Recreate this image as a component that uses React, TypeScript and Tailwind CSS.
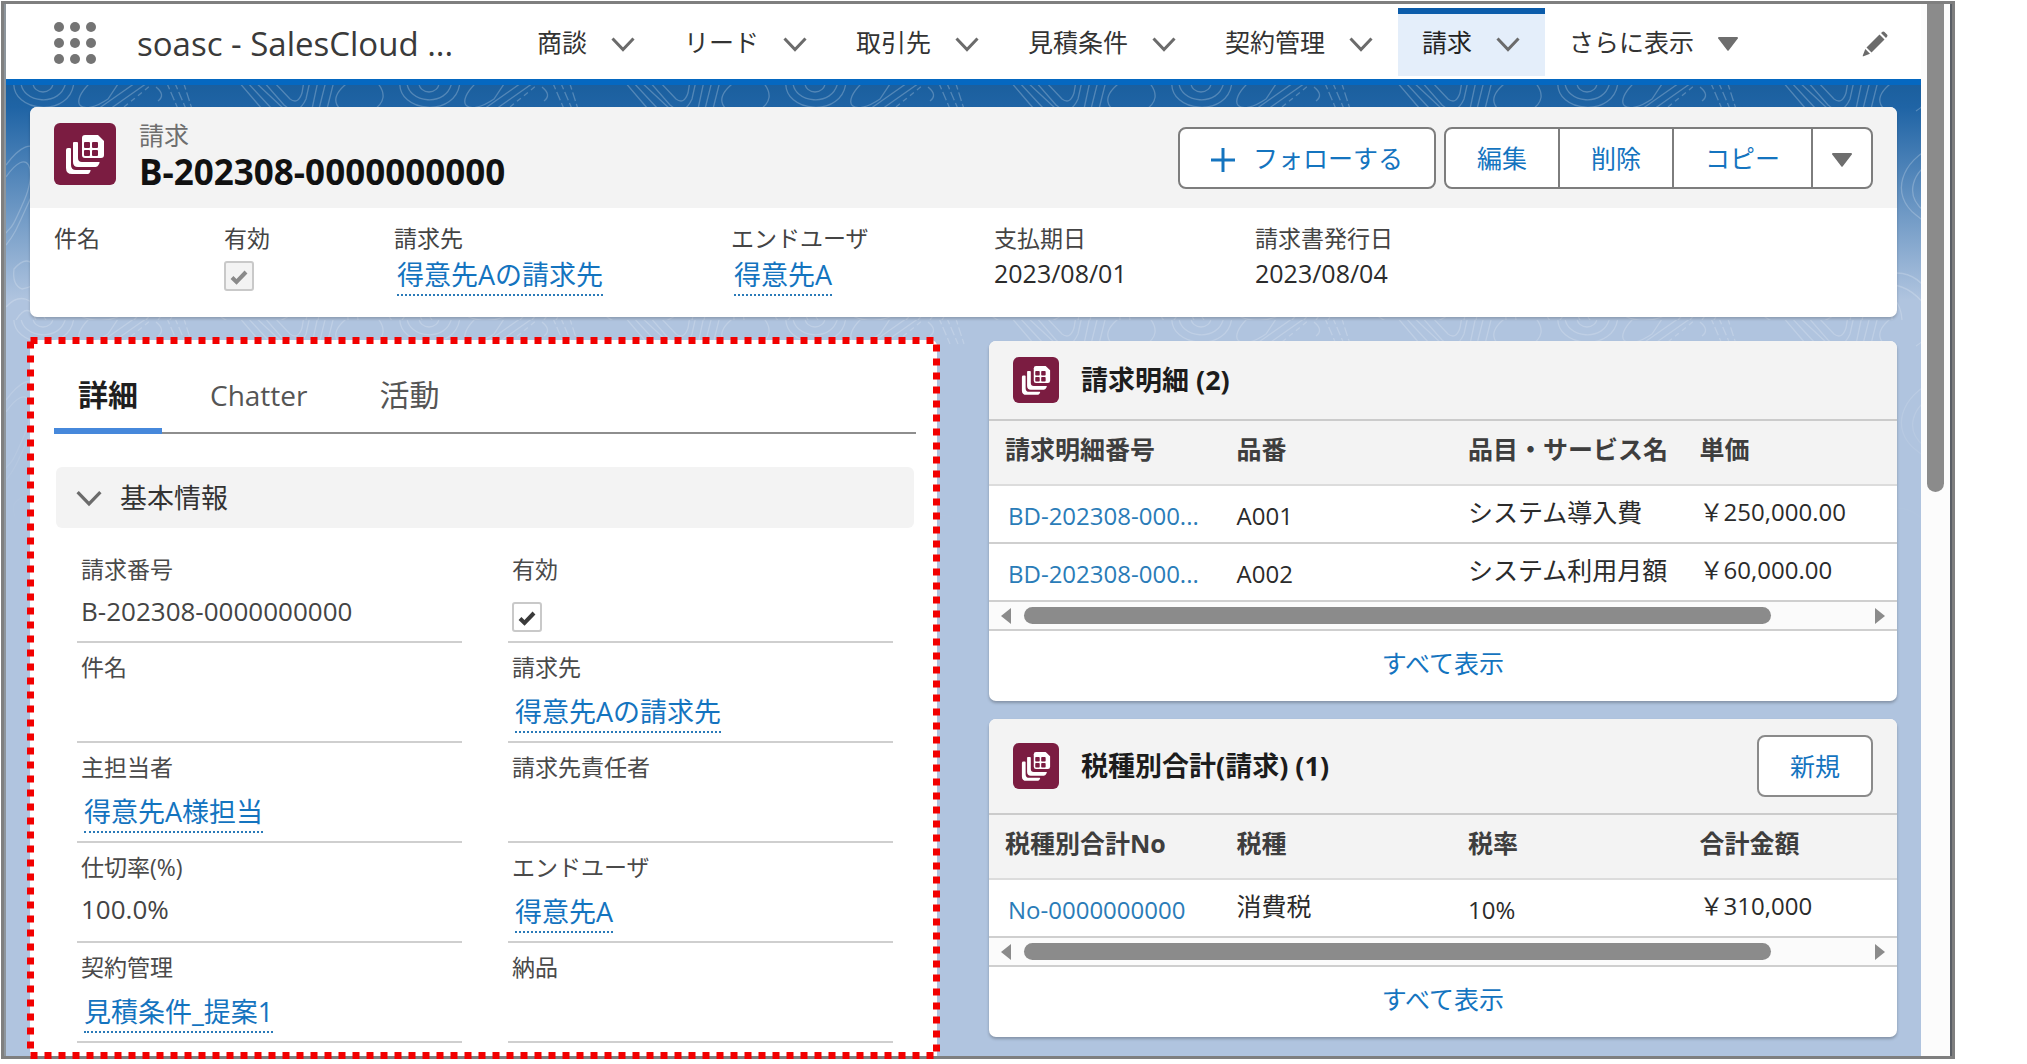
import type { ReactNode } from "react";

const navItems = [
  { label: "商談" },
  { label: "リード" },
  { label: "取引先" },
  { label: "見積条件" },
  { label: "契約管理" },
  { label: "請求", active: true },
];

function Chevron({ className = "" }: { className?: string }) {
  return (
    <svg viewBox="0 0 24 24" className={className} fill="none" stroke="#6b6b6b" strokeWidth="3" aria-hidden="true">
      <path d="M1.5 6.5 L12 17.5 L22.5 6.5" />
    </svg>
  );
}

function Triangle({ className = "" }: { className?: string }) {
  return (
    <svg viewBox="0 0 20 14" className={className} fill="#6e6e6e" aria-hidden="true">
      <path d="M1 0h18a1 1 0 0 1 .8 1.600L10.800 13.300a1 1 0 0 1-1.600 0L.2 1.600A1 1 0 0 1 1 0Z" />
    </svg>
  );
}

function RecordIcon({ className = "" }: { className?: string }) {
  return (
    <span className={`block shrink-0 bg-[#7b1c41] ${className}`}>
      <svg viewBox="0 0 62 62" className="h-full w-full" aria-hidden="true">
        <path d="M31 12h13l6 6v14a3 3 0 0 1-3 3H31a3 3 0 0 1-3-3V15a3 3 0 0 1 3-3Z" fill="#fff" />
        <g fill="#7b1c41">
          <rect x="30" y="19" width="6" height="6" rx="1" />
          <rect x="38" y="19" width="6" height="6" rx="1" />
          <rect x="30" y="27" width="6" height="6" rx="1" />
          <rect x="38" y="27" width="6" height="6" rx="1" />
        </g>
        <path d="M19 20q0-1 1-1h3q1 0 1 1v15q0 4 4 4h17q1 0 .5 1l-1 2q-1 2-3 2H24q-5 0-5-5Z" fill="#fff" />
        <path d="M12 27q0-2 2-2h2q1 0 1 1v16q0 5 5 5h14q1 0 .5 1l-1 2q-.5 1-2 1H18q-6 0-6-6Z" fill="#fff" />
      </svg>
    </span>
  );
}

function Pencil() {
  return (
    <svg viewBox="0 0 26 26" className="h-[26px] w-[26px]" fill="#6b6b6b" aria-hidden="true">
      <path d="M17.500 3.500 L22.500 8.500 L9.500 21.500 L4.500 16.500 Z" />
      <path d="M19 2 L20.500 .8 Q21.500 0 22.500 .9 L25 3.500 Q26 4.500 25.200 5.500 L24 7 Z" />
      <path d="M3.300 18 L8 22.700 L1.500 25.200 Q.3 25.600 .8 24.400 Z" />
    </svg>
  );
}

function Contours() {
  return (
    <svg className="absolute inset-0 h-[500px] w-full" aria-hidden="true">
      <defs>
        <pattern id="contours" width="386" height="235" patternUnits="userSpaceOnUse">
          <g fill="none" stroke="#fff" strokeOpacity="0.24" strokeWidth="1.300">
            <ellipse cx="37" cy="-2" rx="10" ry="9" />
            <path d="M15 -4 C14 18 56 24 60 -4" />
            <path d="M8 -4 C4 28 66 34 68 -4" />
            <path d="M86 -4 C60 20 76 32 102 14 L114 -4" />
            <path d="M92 24 L132 -4 M104 24 L144 -4" />
            <path d="M118 22 L150 -4" strokeDasharray="5 4" />
            <path d="M160 -4 L172 24 M168 -4 L180 24 M177 -4 L186 24" strokeDasharray="9 3" />
            <path d="M150 2 q10 8 2 14" />
            <path d="M232 -4 L256 24 M240 -4 L266 24 M248 -4 L278 24" />
            <path d="M257 -4 L278 20 Q292 32 300 14 L304 -4" />
            <path d="M267 -4 L284 14 Q292 20 296 8 L298 -4" />
            <path d="M312 -4 L306 24 M320 -4 L313 24 M328 -4 L321 24" />
            <path d="M344 -4 Q322 12 334 24 M370 -4 Q386 14 366 26" />
            <path d="M0 80 C30 40 44 70 26 110 S8 150 0 160" />
            <path d="M0 92 C22 60 32 84 18 116 S6 140 0 148" />
            <path d="M386 60 C350 76 340 110 366 130 S384 150 386 158" />
            <path d="M386 74 C362 86 354 110 374 126" />
            <path d="M8 184 q14 -16 22 0 t-14 20 q-10 -4 -8 -20Z" />
            <path d="M60 220 Q90 250 130 222 T210 228 T300 218 T386 236" />
            <path d="M40 206 Q84 236 124 208 T206 214 T304 206 T386 220" />
            <path d="M128 235 L160 200 M140 235 L166 204 M152 235 L174 204 M164 235 L180 208" />
            <path d="M0 222 Q20 200 40 235 M10 235 Q22 216 30 235" />
            <path d="M300 235 C310 190 350 200 352 235 M312 235 C318 208 342 210 342 235" />
          </g>
        </pattern>
        <linearGradient id="contourFade" x1="0" y1="0" x2="0" y2="1">
          <stop offset="0" stopColor="#fff" />
          <stop offset="0.500" stopColor="#fff" stopOpacity="0.800" />
          <stop offset="0.900" stopColor="#fff" stopOpacity="0" />
        </linearGradient>
        <mask id="contourMask">
          <rect width="100%" height="100%" fill="url(#contourFade)" />
        </mask>
      </defs>
      <rect width="100%" height="100%" fill="url(#contours)" mask="url(#contourMask)" />
    </svg>
  );
}

function CheckBox({ id, muted = false }: { id: string; muted?: boolean }) {
  return (
    <span className="relative block h-[30px] w-[30px]">
      <input
        id={id}
        type="checkbox"
        defaultChecked
        disabled
        className={
          muted
            ? "block h-[30px] w-[30px] appearance-none rounded-[3px] border-2 border-[#c9c9c9] bg-[#f3f3f3]"
            : "block h-[30px] w-[30px] appearance-none rounded-[3px] border-2 border-[#c9c9c9] bg-white"
        }
      />
      <svg
        viewBox="0 0 30 30"
        className="pointer-events-none absolute inset-0"
        fill="none"
        stroke={muted ? "#8a8a8a" : "#3a3a3a"}
        strokeWidth="4"
        aria-hidden="true"
      >
        <path d="M8 16.500 L12.500 21 L22 11" />
      </svg>
    </span>
  );
}

function RecordLink({ children }: { children: ReactNode }) {
  return (
    <a href="#record" className="mt-[2px] ml-[3px] inline-block border-b-2 border-dotted border-[#2a7ab8] text-[27px] leading-[38px] text-[#1474bf]">
      {children}
    </a>
  );
}

function Highlight({ label, children }: { label: string; children?: ReactNode }) {
  return (
    <div>
      <div className="text-[23px] leading-8 text-[#444]">{label}</div>
      <div className="text-[25px] leading-[38px] text-[#2b2b2b]">{children}</div>
    </div>
  );
}

function Field({ label, children, first = false }: { label: string; children?: ReactNode; first?: boolean }) {
  return (
    <div className={first ? "h-[98px] border-b-2 border-[#cfcfcf] pt-2 pl-1" : "h-[100px] border-b-2 border-[#cfcfcf] pt-2 pl-1"}>
      <div className="text-[23px] leading-8 text-[#4a4a4a]">{label}</div>
      <div className="mt-2 text-[26px] leading-9 text-[#444]">{children}</div>
    </div>
  );
}

type RelatedProps = { title: string; action?: ReactNode; columns: string[]; rows: string[][] };

function RelatedList({ title, action, columns, rows }: RelatedProps) {
  return (
    <article className="overflow-hidden rounded-[7px] bg-white shadow-[0_2px_3px_rgba(0,0,0,0.250)]">
      <header className="flex items-center border-b-2 border-[#cbcbcb] bg-[#f3f3f3] px-6 py-4">
        <RecordIcon className="h-[46px] w-[46px] rounded-md" />
        <h2 className="ml-[22px] flex-1 text-[27px] leading-9 font-bold text-[#1c1c1c]">{title}</h2>
        {action}
      </header>
      <table className="w-full table-fixed border-collapse">
        <colgroup>
          <col className="w-[25.5%]" />
          <col className="w-[25.5%]" />
          <col className="w-[25.5%]" />
          <col />
        </colgroup>
        <thead>
          <tr className="h-16 border-b-2 border-[#dcdcdc] bg-[#f3f3f3]">
            {columns.map((c) => (
              <th key={c} scope="col" className="pb-2 pl-4 text-left text-[25px] leading-8 font-bold whitespace-nowrap text-[#3e3e3e]">
                {c}
              </th>
            ))}
          </tr>
        </thead>
        <tbody>
          {rows.map((r) => (
            <tr key={r[1]} className="h-[58px] border-b-2 border-[#cfcfcf]">
              {r.map((cell, i) => {
                const japanese = /[ぁ-ヿ一-龠]/.test(cell);
                const raised = cell.startsWith("￥");
                return (
                  <td
                    key={i}
                    className={
                      japanese
                        ? "pb-1 pl-4 text-[25px] leading-8 whitespace-nowrap text-[#2b2b2b]"
                        : raised
                          ? "pb-1 pl-4 text-2xl leading-8 whitespace-nowrap text-[#2b2b2b]"
                          : "pt-1 pl-4 text-2xl leading-8 whitespace-nowrap text-[#2b2b2b]"
                    }
                  >
                    {i === 0 ? (
                      <a href="#line" className="pl-[3px] text-[#2a7cb8]">
                        {cell}
                      </a>
                    ) : (
                      cell
                    )}
                  </td>
                );
              })}
            </tr>
          ))}
        </tbody>
      </table>
      <div className="flex h-[29px] items-center border-b-2 border-[#cfcfcf] bg-[#fbfbfb] px-3">
        <svg viewBox="0 0 10 16" className="h-4 w-[10px]" fill="#8b8b8b" aria-hidden="true">
          <path d="M10 0v16L0 8Z" />
        </svg>
        <div className="mr-3 ml-[13px] flex-1">
          <div className="h-[17px] w-[89%] rounded-full bg-[#8b8b8b]" />
        </div>
        <svg viewBox="0 0 10 16" className="h-4 w-[10px]" fill="#8b8b8b" aria-hidden="true">
          <path d="M0 0v16l10-8Z" />
        </svg>
      </div>
      <footer className="flex justify-center pt-4 pb-[22px]">
        <a href="#all" className="text-[25px] leading-8 text-[#1474bf]">
          すべて表示
        </a>
      </footer>
    </article>
  );
}

export default function App() {
  return (
    <div className="bg-white pt-px pr-[72px] pb-[5px] pl-px font-['Open_Sans','Noto_Sans_CJK_JP',sans-serif]">
      <div className="border-[3px] border-[#7f7f7f]">
        <div className="flex border-r-2 border-l-2 border-r-[#5a5f66] border-l-[#8d959c]">
          <div className="min-w-0 flex-1">
            <header className="flex h-[75px] items-start bg-white">
              <button type="button" aria-label="アプリケーションランチャー" className="mt-[18px] ml-12">
                <svg viewBox="0 0 42 42" className="h-[42px] w-[42px]" fill="#747474">
                  {[5, 21, 37].map((y) => [5, 21, 37].map((x) => <circle key={`${x}-${y}`} cx={x} cy={y} r="5" />))}
                </svg>
              </button>
              <div className="mt-[13px] ml-[41px] w-[376px] text-[33px] leading-[54px] whitespace-nowrap text-[#3a3a3a]">soasc - SalesCloud ...</div>
              <nav className="flex h-[72px] flex-1 pt-1">
                {navItems.map((n) => (
                  <a
                    key={n.label}
                    href="#nav"
                    className={
                      n.active
                        ? "flex items-center gap-6 border-t-[6px] border-[#0b5cab] bg-[#e4eefa] pr-[25px] pb-[6px] pl-6 text-[25px] leading-8 whitespace-nowrap text-[#222]"
                        : "flex items-center gap-6 pr-[25px] pl-6 text-[25px] leading-8 whitespace-nowrap text-[#333]"
                    }
                  >
                    {n.label}
                    <Chevron className="mt-1 h-6 w-6" />
                  </a>
                ))}
                <button type="button" className="flex items-center gap-6 pr-6 pl-6 text-[25px] leading-8 whitespace-nowrap text-[#333]">
                  さらに表示
                  <Triangle className="mt-1 h-[14px] w-5" />
                </button>
                <button type="button" aria-label="編集" className="mt-1 mr-[33px] ml-auto">
                  <Pencil />
                </button>
              </nav>
            </header>

            <div className="relative border-t-[6px] border-[#0568c1] bg-[#b0c4df] bg-[linear-gradient(to_bottom,#1b5f9e_0,#1f64a5_22px,#b0c4df_215px)] pt-[22px]">
              <Contours />

              <section className="relative mx-6 overflow-hidden rounded-[7px] bg-white shadow-[0_2px_3px_rgba(0,0,0,0.200)]">
                <div className="flex h-[101px] items-start bg-[#f3f3f3] px-6 pt-4">
                  <RecordIcon className="h-[62px] w-[62px] rounded-md" />
                  <div className="ml-[23px] flex-1">
                    <div className="-mt-1 text-[25px] leading-8 text-[#6e6e6e]">請求</div>
                    <h1 className="text-[35px] leading-[42px] font-bold text-[#111]">B-202308-0000000000</h1>
                  </div>
                  <div className="mt-1 flex text-[25px] leading-8 whitespace-nowrap text-[#1474bf]">
                    <button type="button" className="mr-2 flex h-[62px] items-center gap-[18px] rounded-lg border-2 border-[#7d7d7d] bg-white px-[31px]">
                      <svg viewBox="0 0 24 24" className="mt-1 h-6 w-6" stroke="#1474bf" strokeWidth="3" aria-hidden="true">
                        <path d="M12 0v24M0 12h24" />
                      </svg>
                      フォローする
                    </button>
                    <div className="flex h-[62px] divide-x-2 divide-[#7d7d7d] rounded-lg border-2 border-[#7d7d7d] bg-white">
                      <button type="button" className="px-[31px]">編集</button>
                      <button type="button" className="px-[31px]">削除</button>
                      <button type="button" className="px-[31px]">コピー</button>
                      <button type="button" aria-label="その他のアクション" className="px-[19px] pt-1">
                        <Triangle className="h-[14px] w-5" />
                      </button>
                    </div>
                  </div>
                </div>
                <div className="grid h-[109px] grid-cols-[170fr_170fr_337fr_263fr_261fr_618fr] px-6 pt-[14px]">
                  <Highlight label="件名" />
                  <div>
                    <label htmlFor="hl-active" className="block text-[23px] leading-8 text-[#444]">有効</label>
                    <div className="pt-[7px]">
                      <CheckBox id="hl-active" muted />
                    </div>
                  </div>
                  <Highlight label="請求先">
                    <RecordLink>得意先Aの請求先</RecordLink>
                  </Highlight>
                  <Highlight label="エンドユーザ">
                    <RecordLink>得意先A</RecordLink>
                  </Highlight>
                  <Highlight label="支払期日">2023/08/01</Highlight>
                  <Highlight label="請求書発行日">2023/08/04</Highlight>
                </div>
              </section>

              <div className="relative mt-5 grid grid-cols-[913fr_908fr] gap-[49px] pr-6 pl-[21px]">
                <section className="relative z-10 -mb-[3px] p-[3px]">
                  <svg className="pointer-events-none absolute top-[3px] left-[3px] h-[calc(100%-7px)] w-[calc(100%-7px)] overflow-visible" aria-hidden="true">
                    <rect x="0.500" y="0.500" width="100%" height="100%" fill="none" stroke="#f20000" strokeWidth="7" strokeDasharray="7 7" />
                  </svg>
                  <div className="h-full rounded-t-md bg-white pt-[29px] pr-[21px] pl-6">
                    <div role="tablist" className="flex gap-6 border-b-2 border-[#8e8e8e]">
                      <button type="button" role="tab" aria-selected="true" className="-mb-[2px] border-b-[6px] border-[#4688db] px-6 pt-1 pb-[11px] text-[30px] leading-[44px] font-bold text-[#1f1f1f]">
                        詳細
                      </button>
                      <button type="button" role="tab" aria-selected="false" className="px-6 pt-1 pb-[15px] text-[28px] leading-[44px] text-[#555]">
                        Chatter
                      </button>
                      <button type="button" role="tab" aria-selected="false" className="px-6 pt-1 pb-[15px] text-[30px] leading-[44px] text-[#555]">
                        活動
                      </button>
                    </div>
                    <h3 className="mx-[2px] mt-[33px]">
                      <button type="button" className="flex h-[61px] w-full items-center gap-[18px] rounded-md bg-[#f3f3f3] pl-5 text-[27px] leading-9 text-[#333]">
                        <Chevron className="h-[26px] w-[26px]" />
                        基本情報
                      </button>
                    </h3>
                    <div className="mt-[17px] mr-[23px] ml-[23px] grid grid-cols-2 gap-x-[46px]">
                      <Field label="請求番号" first>B-202308-0000000000</Field>
                      <div className="h-[98px] border-b-2 border-[#cfcfcf] pt-2 pl-1">
                        <label htmlFor="detail-active" className="block text-[23px] leading-8 text-[#4a4a4a]">有効</label>
                        <div className="pt-[17px]">
                          <CheckBox id="detail-active" />
                        </div>
                      </div>
                      <Field label="件名" />
                      <Field label="請求先">
                        <RecordLink>得意先Aの請求先</RecordLink>
                      </Field>
                      <Field label="主担当者">
                        <RecordLink>得意先A様担当</RecordLink>
                      </Field>
                      <Field label="請求先責任者" />
                      <Field label="仕切率(%)">100.0%</Field>
                      <Field label="エンドユーザ">
                        <RecordLink>得意先A</RecordLink>
                      </Field>
                      <Field label="契約管理">
                        <RecordLink>見積条件_提案1</RecordLink>
                      </Field>
                      <Field label="納品" />
                    </div>
                  </div>
                </section>

                <div className="flex flex-col gap-[18px] pt-1 pb-[19px]">
                  <RelatedList
                    title="請求明細 (2)"
                    columns={["請求明細番号", "品番", "品目・サービス名", "単価"]}
                    rows={[
                      ["BD-202308-000...", "A001", "システム導入費", "￥250,000.00"],
                      ["BD-202308-000...", "A002", "システム利用月額", "￥60,000.00"],
                    ]}
                  />
                  <RelatedList
                    title="税種別合計(請求) (1)"
                    action={
                      <button type="button" className="h-[62px] rounded-lg border-2 border-[#8a8a8a] bg-white px-[31px] text-[25px] leading-8 text-[#1474bf]">
                        新規
                      </button>
                    }
                    columns={["税種別合計No", "税種", "税率", "合計金額"]}
                    rows={[["No-0000000000", "消費税", "10%", "￥310,000"]]}
                  />
                </div>
              </div>
            </div>
          </div>

          <div className="w-[29px] bg-[#fcfcfc] px-[6px]" aria-hidden="true">
            <div className="h-[488px] rounded-b-full bg-[#8b8b8b]" />
          </div>
        </div>
      </div>
    </div>
  );
}
